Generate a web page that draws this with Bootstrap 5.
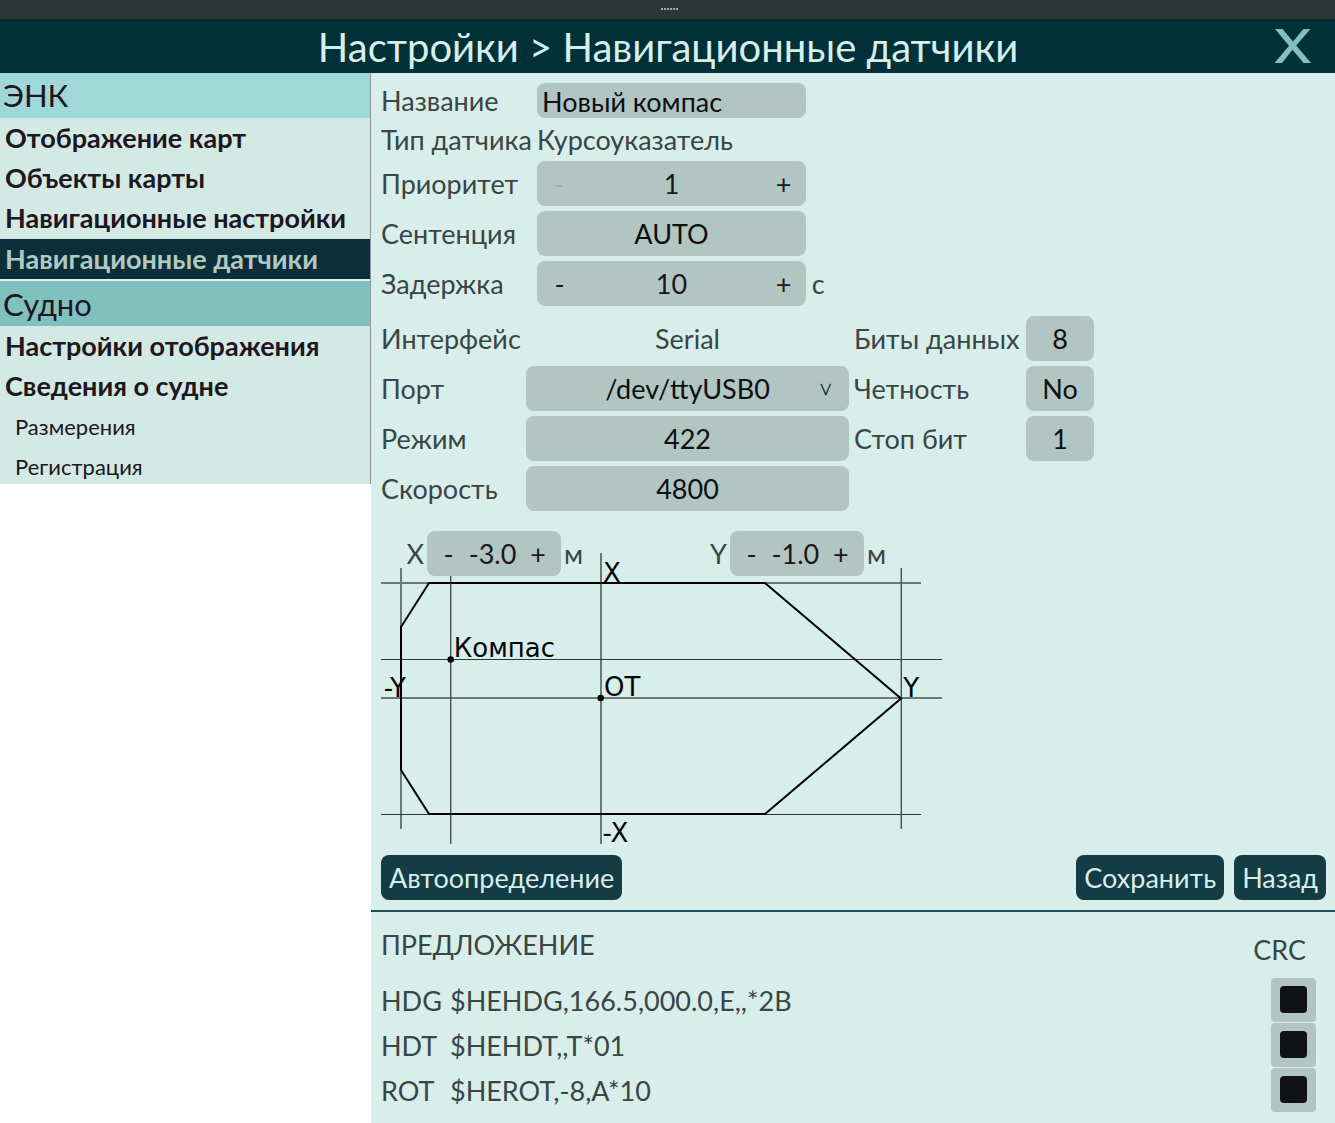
<!DOCTYPE html>
<html lang="ru">
<head>
<meta charset="utf-8">
<meta name="viewport" content="width=device-width, initial-scale=1">
<title>Настройки</title>
<link href="https://cdn.jsdelivr.net/npm/bootstrap@5.3.0/dist/css/bootstrap.min.css" rel="stylesheet">
<style>
body{font-family:Lato,"Noto Sans",sans-serif;font-size:27px;line-height:1.2;color:#3a4544;background:#fff;height:1123px;overflow:hidden}
.grip{height:19px;background:#2f3437;padding-left:4px}
.titlebar{height:54px;background:#003038;color:#d8eeeb}
.titlebar h1{font-size:40px;line-height:56px;font-weight:400;padding-left:1px}
.close-x{right:24px;top:9px;line-height:0}
.side{width:371px;height:411px;border-right:1px solid #8f9696;background:#d2eae3;color:#20161f}
.side-head{height:45px;font-size:31px;padding:1px 0 0 3px;background:#a0d8da}
.side-head.alt{background:#80c1c0;padding-top:2px}
.side-item{height:40.33px;padding-left:5px;font-weight:700;white-space:nowrap}
.side-item.up{padding-bottom:.5px}
.side-item.sel{background:#0b2e38;color:#b1c9c3;height:40px}
.side-item.sub{font-weight:400;font-size:22px;padding-left:15px}
.sep{height:2px;background:#e6f4f0}
.main{background:#d8eeeb;height:1050px}
.pane{height:837px;padding:10px 9px 0 10px}
.form-a{display:grid;grid-template-columns:156px 269px auto;grid-template-rows:35px 33px repeat(3,45px);row-gap:5px;align-items:center;white-space:nowrap}
.form-b{display:grid;grid-template-columns:145px 323px 177px 68px;grid-template-rows:repeat(4,45px);row-gap:5px;align-items:center;margin-top:10px;white-space:nowrap}
.form-a>.txt,.form-b>.txt{padding-top:2px}
.form-b .lbl2{padding-left:5px}
.fld{background:#b1c5c2;border-radius:8px;color:#0d0f11;height:45px;display:flex;align-items:center;justify-content:center;position:relative;padding-top:1.4px}
.fld.name{height:35px;justify-content:flex-start;padding:3px 0 0 5px}
.spin{display:grid;grid-template-columns:45px 1fr 45px;text-align:center;color:#1c1520}
.spin.small-spin{width:134px;grid-template-columns:43px 45px 46px}
.small-spin span:nth-child(2){margin:0 -4px 0 -4px}
.off{color:#9aafac}
.caret{position:absolute;right:18px;top:13px;font-size:16px;line-height:19px;font-weight:300;-webkit-text-stroke:.3px #0d0f11}
.plan{height:314px;margin-top:20px;position:relative}
.plan svg{position:absolute;left:0;top:0}
.offs{position:relative;height:45px;width:505px}
.offs .axis{width:46px;text-align:right;padding:1px 3px 0 0}
.offs .unit{padding:2px 0 0 3px}
.acts{gap:10px;margin-top:9.5px}
.act{background:#133c45;color:#d8eeeb;border:0;border-radius:8px;height:45px;padding:2px 8px 0;font-size:27px;line-height:1.2}
.act:hover{background:#1b4a54;color:#fff}
.rule{height:2px;background:#24505a}
.sent{padding:0 19px 0 10px}
.sent-head{height:65.5px;padding-top:17px}
.crc{padding:5.4px 10px 0 0}
.sent-row{height:45px}
.sent-row>span:not(.chk){padding-top:2px}
.sent-code{width:69px}
.chk{width:45px;height:44.6px;background:#b1c5c2;border-radius:4px;display:flex;align-items:center;justify-content:center;padding-bottom:.5px}
.chk i{width:27px;height:27px;background:#101214;border-radius:4px}
</style>
</head>
<body>
<div class="grip d-flex justify-content-center">
<svg width="20" height="19" fill="#a9adae"><path d="M1 8h2v2H1zM4 8h2v2H4zM7 8h2v2H7zM10 8h2v2H10zM13 8h2v2H13zM16 8h2v2H16z"/></svg>
</div>
<header class="titlebar position-relative text-center">
<h1 class="m-0">Настройки &gt; Навигационные датчики</h1>
<div class="close-x position-absolute"><svg width="37" height="36"><path fill="#80c1c0" d="M1 1H8.500L19 13.500 29.500 1H36.500L22.200 17.500 37 35H29.500L18.500 21.800 8 35H0.500L15 17.700Z"/></svg></div>
</header>
<div class="d-flex align-items-start">
<nav class="side flex-shrink-0">
<div class="side-head d-flex align-items-center">ЭНК</div>
<div class="side-item d-flex align-items-center">Отображение карт</div>
<div class="side-item d-flex align-items-center">Объекты карты</div>
<div class="side-item up d-flex align-items-center">Навигационные настройки</div>
<div class="side-item sel d-flex align-items-center">Навигационные датчики</div>
<div class="sep"></div>
<div class="side-head alt d-flex align-items-center">Судно</div>
<div class="side-item d-flex align-items-center">Настройки отображения</div>
<div class="side-item down d-flex align-items-center pt-1 pb-1"><span>Сведения о судне</span></div>
<div class="side-item sub d-flex align-items-center">Размерения</div>
<div class="side-item sub d-flex align-items-center">Регистрация</div>
</nav>
<main class="main flex-grow-1">
<section class="pane">
<div class="form-a">
<div class="txt">Название</div><div class="fld name">Новый компас</div><div></div>
<div class="txt">Тип датчика</div><div class="txt">Курсоуказатель</div><div></div>
<div class="txt">Приоритет</div><div class="fld spin"><span class="off">-</span><span>1</span><span>+</span></div><div></div>
<div class="txt">Сентенция</div><div class="fld">AUTO</div><div></div>
<div class="txt">Задержка</div><div class="fld spin"><span>-</span><span>10</span><span>+</span></div><div class="txt ps-1">&#8202;с</div>
</div>
<div class="form-b">
<div class="txt">Интерфейс</div><div class="txt text-center">Serial</div><div class="txt lbl2">Биты данных</div><div class="fld">8</div>
<div class="txt">Порт</div><div class="fld">/dev/ttyUSB0<span class="caret">V</span></div><div class="txt lbl2">Четность</div><div class="fld">No</div>
<div class="txt">Режим</div><div class="fld">422</div><div class="txt lbl2">Стоп бит</div><div class="fld">1</div>
<div class="txt">Скорость</div><div class="fld">4800</div>
</div>
<div class="plan">
<svg width="562" height="322" viewBox="381 531 562 322" font-family="'DejaVu Sans',sans-serif" font-size="26" fill="#050505">
<g stroke="#6b7977" stroke-width="2">
<path d="M381 583H921M381 698H942M401 568V829M601 553V844"/>
</g>
<g stroke="#2e3837" stroke-width="1"><path d="M381 659.500H942M381 814.500H921"/></g>
<g stroke="#46504f" stroke-width="1.400"><path d="M450.700 568V844M901.300 568V829"/></g>
<path d="M429 583H765L901 698.500 765 814H429L401 770V627Z" fill="none" stroke="#000" stroke-width="2"/>
<circle cx="450.700" cy="659.500" r="3.300"/><circle cx="600.700" cy="698" r="3.300"/>
<text x="603" y="581.500">X</text><text x="453.800" y="656.500">Компас</text><text x="604" y="695.500">OT</text><text x="383.700" y="696.500">-Y</text><text x="903.300" y="696.500">Y</text><text x="602.500" y="841.500">-X</text>
</svg>
<div class="offs d-flex align-items-center">
<span class="axis">X</span><div class="fld spin small-spin"><span>-</span><span>-3.0</span><span>+</span></div><span class="unit">м</span>
<span class="axis ms-auto">Y</span><div class="fld spin small-spin"><span>-</span><span>-1.0</span><span>+</span></div><span class="unit">м</span>
</div>
</div>
<div class="d-flex acts">
<button class="act me-auto">Автоопределение</button><button class="act">Сохранить</button><button class="act">Назад</button>
</div>
</section>
<div class="rule"></div>
<section class="sent">
<div class="sent-head d-flex justify-content-between"><span>ПРЕДЛОЖЕНИЕ</span><span class="crc">CRC</span></div>
<div class="sent-row d-flex align-items-center"><span class="sent-code">HDG</span><span>$HEHDG,166.5,000.0,E,,*2B</span><span class="chk ms-auto"><i></i></span></div>
<div class="sent-row d-flex align-items-center"><span class="sent-code">HDT</span><span>$HEHDT,,T*01</span><span class="chk ms-auto"><i></i></span></div>
<div class="sent-row d-flex align-items-center"><span class="sent-code">ROT</span><span>$HEROT,-8,A*10</span><span class="chk ms-auto"><i></i></span></div>
</section>
</main>
</div>
<script src="https://cdn.jsdelivr.net/npm/bootstrap@5.3.0/dist/js/bootstrap.bundle.min.js"></script>
</body>
</html>
